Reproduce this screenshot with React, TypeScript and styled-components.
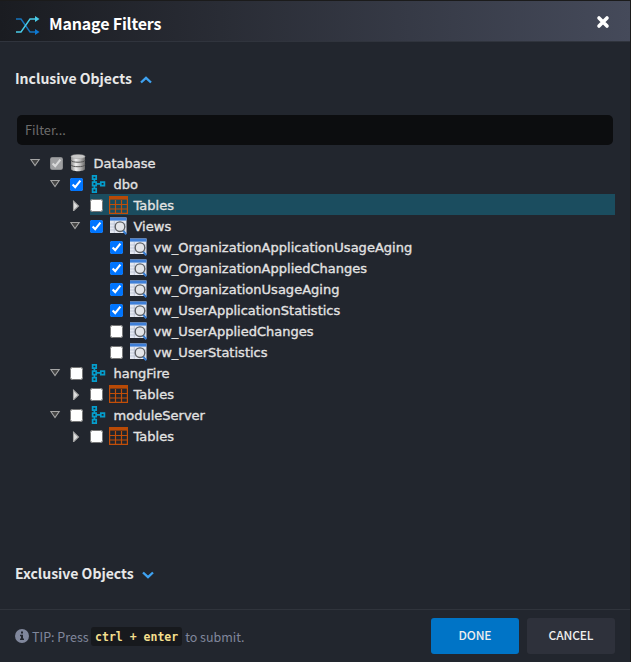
import React from 'react';
import styled, { createGlobalStyle } from 'styled-components';

const sans = '"Noto Sans CJK SC", sans-serif';

const GlobalStyle = createGlobalStyle`
  * { box-sizing: border-box; }
  body { margin: 0; background: #1d1d1d; overflow: hidden; }
  svg { display: block; flex: none; }
`;

const Dialog = styled.div`
  width: 631px;
  height: 662px;
  display: flex;
  flex-direction: column;
  border-top: 1px solid #1b1b1b;
  border-right: 1px solid #1b1b1b;
  background: #22262e;
  color: #e4e4e4;
  font-family: ${sans};
`;

const Header = styled.header`
  height: 41px;
  flex: none;
  display: flex;
  align-items: center;
  padding: 0 20px 0 15px;
  border-bottom: 1px solid #30343d;
  background: linear-gradient(90deg, #1a1c21 0%, #454a5a 100%);
`;

const Logo = styled.span`
  margin-top: 10px;
`;

const Title = styled.h1`
  flex: 1;
  margin: 4px 0 0 9px;
  font-size: 16px;
  line-height: 24px;
  font-weight: 700;
  letter-spacing: -0.18px;
  color: #fff;
`;

const CloseButton = styled.button`
  margin-top: 1px;
  padding: 0;
  border: 0;
  background: none;
  line-height: 0;
`;

const Body = styled.main`
  flex: 1;
  display: flex;
  flex-direction: column;
  padding: 24px 15px 0;
`;

const SectionTitle = styled.h2`
  display: flex;
  align-items: center;
  gap: 8px;
  height: 24px;
  margin: 0;
  font-size: 14px;
  font-weight: 700;
  color: #e8e8e8;
  svg { margin-top: 4px; }
`;

const FilterInput = styled.input`
  height: 30px;
  flex: none;
  margin: 25px 2px 7px;
  padding: 0 8px 1px;
  border: 0;
  border-radius: 5px;
  background: #0c0d0f;
  color: #ddd;
  font: 12.8px ${sans};
  &::placeholder { color: #6c6c6c; }
`;

const Tree = styled.div`
  flex: 1;
`;

const TreeRow = styled.div<{ $depth: number }>`
  display: flex;
  height: 21px;
  padding-left: ${p => 15 + p.$depth * 20}px;
`;

const Toggle = styled.span`
  width: 20px;
  flex: none;
  display: flex;
  align-items: center;
`;

const Node = styled.label<{ $active?: boolean }>`
  flex: 1;
  display: flex;
  align-items: center;
  background: ${p => (p.$active ? '#1b4d5f' : 'transparent')};
`;

const Check = styled.input`
  width: 13px;
  height: 13px;
  margin: 2px 0 0;
  flex: none;
`;

const IconCell = styled.span`
  width: 18px;
  margin: 0 6.5px 0 6px;
  flex: none;
`;

const NodeText = styled.span`
  padding-top: 2px;
  font: 13px/21px "DejaVu Sans", Verdana, sans-serif;
  letter-spacing: 0.01px;
  color: #e2e2e2;
  -webkit-text-stroke: 0.35px #e2e2e2;
`;

const ExclusiveRow = styled.div`
  height: 48px;
  flex: none;
`;

const Footer = styled.footer`
  height: 53px;
  flex: none;
  display: flex;
  align-items: center;
  padding: 0 15px;
  border-top: 1px solid #30343c;
`;

const Tip = styled.div`
  flex: 1;
  display: flex;
  align-items: center;
  gap: 3px;
  font-size: 12.5px;
  color: #80879c;
`;

const Keys = styled.code`
  height: 19px;
  margin-left: -0.5px;
  padding: 0 4px;
  border-radius: 3px;
  background: #17191d;
  color: #f3df8d;
  font: bold 11.5px/20px "DejaVu Sans Mono", monospace;
`;

const Button = styled.button<{ $primary?: boolean }>`
  width: 88px;
  height: 36px;
  margin-left: 8px;
  padding: 0 0 3px;
  border: 0;
  border-radius: 3px;
  background: ${p => (p.$primary ? '#0074c6' : '#2e313b')};
  color: #eee;
  font: 500 12px ${sans};
  letter-spacing: -0.15px;
`;

const ShuffleIcon = () => (
  <svg width="25" height="20" viewBox="0 0 25 20" fill="none" strokeWidth="1.4">
    <path d="M1 3H6L15 16H21" stroke="#1674bd" />
    <path d="M1 16H6L15 3H21" stroke="#49cbe8" />
    <path d="M20 0L24.5 3L20 6Z" fill="#49cbe8" />
    <path d="M20 13L24.5 16L20 19Z" fill="#0c78d4" />
  </svg>
);

const Chevron = ({ up }: { up?: boolean }) => (
  <svg width="12" height="8" viewBox="0 0 12 8" fill="none" stroke="#3ea2f2" strokeWidth="2.3">
    <path d={up ? 'M1 6.5L6 1.8L11 6.5' : 'M1 1.5L6 6.2L11 1.5'} />
  </svg>
);

const Arrow = ({ open }: { open: boolean }) => (
  <svg width="12" height="12" viewBox="0 0 12 12" stroke="#a5a5a5" strokeWidth="1.1">
    {open
      ? <path d="M.8 2.5H9.2L5 8.5Z" fill="#444444" />
      : <path d="M3.5 2.2L8.5 7L3.5 11.8Z" fill="#dedede" />}
  </svg>
);

const DatabaseIcon = () => (
  <svg width="18" height="18" viewBox="0 0 18 18">
    <defs>
      <linearGradient id="metal">
        <stop offset="0" stopColor="#888" />
        <stop offset=".35" stopColor="#f1f1f1" />
        <stop offset=".65" stopColor="#bbb" />
        <stop offset="1" stopColor="#686868" />
      </linearGradient>
    </defs>
    <path d="M2 2.5V15C2 17.9 16 17.9 16 15V2.5Z" fill="url(#metal)" />
    <ellipse cx="9" cy="2.5" rx="7" ry="2.1" fill="#c8c8c8" stroke="#999" strokeWidth=".5" />
    <path d="M2 6.2C2 8.9 16 8.9 16 6.2M2 10.7C2 13.4 16 13.4 16 10.7" fill="none" stroke="#555" strokeWidth="1" />
  </svg>
);

const SchemaIcon = () => (
  <svg width="18" height="18" viewBox="0 0 18 18" fill="none" stroke="#059dcc" strokeWidth="1.7">
    <path d="M3.6.8H7.2V4.2H3.6ZM3.6 7.2H7.2V10.6H3.6ZM3.6 13.7H7.2V17.1H3.6ZM11.8 7.2H15.4V10.6H11.8ZM5.4 4.2V7.2M5.4 10.6V13.7M7.2 8.9H11.8" />
  </svg>
);

const TableIcon = () => (
  <svg width="19" height="18" viewBox="0 0 19 18" fill="none" stroke="#c24e08" strokeWidth="1.2">
    <path d="M0 0H19V3.6H0Z" fill="#b94a06" stroke="none" />
    <path d="M.6 3V17.4H18.4V3M6.5 4V17.4M12.5 4V17.4M.5 8.5H18.5M.5 13H18.5" />
  </svg>
);

const ViewIcon = () => (
  <svg width="18" height="18" viewBox="0 0 18 18">
    <path d="M1 .5H17.5V16H1Z" fill="#e4e8f1" />
    <path d="M5.3 4V16M1 7H17M1 10H17M1 13H17" stroke="#b5bdd0" strokeWidth=".7" />
    <path d="M1 .5H17.5V3.6H1Z" fill="#3e7fd8" />
    <path d="M14 13.5L17.3 17.3" stroke="#397cce" strokeWidth="2.1" />
    <circle cx="11" cy="9.7" r="4.8" fill="#e3e5e9" stroke="#5d6064" strokeWidth="1.4" />
  </svg>
);

const InfoIcon = () => (
  <svg width="14" height="14" viewBox="0 0 14 14">
    <circle cx="7" cy="7" r="7" fill="#80879c" />
    <path d="M6 2.5H8V4.5H6ZM5 5.8H8V9.5H9V11H5V9.5H6V7.2H5Z" fill="#22262e" />
  </svg>
);

const CloseIcon = () => (
  <svg width="14" height="14" viewBox="0 0 14 14" stroke="#fff" strokeWidth="3.6" strokeLinecap="round">
    <path d="M3 3L11 11M11 3L3 11" />
  </svg>
);

const icons = { db: DatabaseIcon, schema: SchemaIcon, table: TableIcon, view: ViewIcon };

interface Item {
  text: string;
  depth: number;
  icon: keyof typeof icons;
  checked?: boolean;
  disabled?: boolean;
  open?: boolean;
  active?: boolean;
}

const items: Item[] = [
  { text: 'Database', depth: 0, icon: 'db', checked: true, disabled: true, open: true },
  { text: 'dbo', depth: 1, icon: 'schema', checked: true, open: true },
  { text: 'Tables', depth: 2, icon: 'table', open: false, active: true },
  { text: 'Views', depth: 2, icon: 'view', checked: true, open: true },
  { text: 'vw_OrganizationApplicationUsageAging', depth: 3, icon: 'view', checked: true },
  { text: 'vw_OrganizationAppliedChanges', depth: 3, icon: 'view', checked: true },
  { text: 'vw_OrganizationUsageAging', depth: 3, icon: 'view', checked: true },
  { text: 'vw_UserApplicationStatistics', depth: 3, icon: 'view', checked: true },
  { text: 'vw_UserAppliedChanges', depth: 3, icon: 'view' },
  { text: 'vw_UserStatistics', depth: 3, icon: 'view' },
  { text: 'hangFire', depth: 1, icon: 'schema', open: true },
  { text: 'Tables', depth: 2, icon: 'table', open: false },
  { text: 'moduleServer', depth: 1, icon: 'schema', open: true },
  { text: 'Tables', depth: 2, icon: 'table', open: false },
];

export default function App() {
  return (
    <>
      <GlobalStyle />
      <Dialog>
        <Header>
          <Logo><ShuffleIcon /></Logo>
          <Title>Manage Filters</Title>
          <CloseButton aria-label="Close"><CloseIcon /></CloseButton>
        </Header>
        <Body>
          <SectionTitle>Inclusive Objects <Chevron up /></SectionTitle>
          <FilterInput placeholder="Filter..." />
          <Tree>
            {items.map((item, i) => {
              const Icon = icons[item.icon];
              return (
                <TreeRow key={i} $depth={item.depth}>
                  <Toggle>{item.open !== undefined && <Arrow open={item.open} />}</Toggle>
                  <Node $active={item.active}>
                    <Check type="checkbox" defaultChecked={item.checked} disabled={item.disabled} />
                    <IconCell><Icon /></IconCell>
                    <NodeText>{item.text}</NodeText>
                  </Node>
                </TreeRow>
              );
            })}
          </Tree>
          <ExclusiveRow>
            <SectionTitle>Exclusive Objects <Chevron /></SectionTitle>
          </ExclusiveRow>
        </Body>
        <Footer>
          <Tip><InfoIcon /> TIP: Press <Keys>ctrl + enter</Keys> to submit.</Tip>
          <Button $primary>DONE</Button>
          <Button>CANCEL</Button>
        </Footer>
      </Dialog>
    </>
  );
}
